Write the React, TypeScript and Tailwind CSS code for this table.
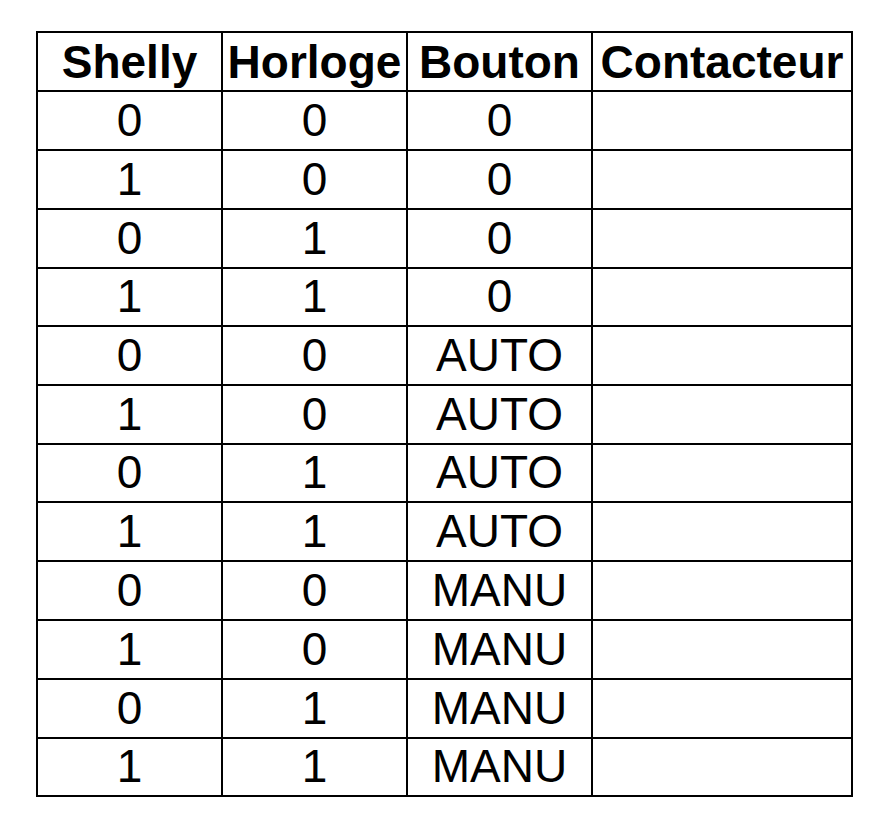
const headers = ['Shelly', 'Horloge', 'Bouton', 'Contacteur'];

const rows: [string, string, string][] = [
  ['0', '0', '0'],
  ['1', '0', '0'],
  ['0', '1', '0'],
  ['1', '1', '0'],
  ['0', '0', 'AUTO'],
  ['1', '0', 'AUTO'],
  ['0', '1', 'AUTO'],
  ['1', '1', 'AUTO'],
  ['0', '0', 'MANU'],
  ['1', '0', 'MANU'],
  ['0', '1', 'MANU'],
  ['1', '1', 'MANU'],
];

export default function App() {
  return (
    <div className="w-[873px] h-[816px] bg-white pl-[36px] pt-[31px] font-['Liberation_Sans',Arial,sans-serif] text-black">
      <div className="grid w-[817px] grid-cols-[183px_183px_183px_258px] grid-rows-[57px_57px_57px_57px_56px_57px_57px_56px_57px_57px_57px_57px_56px] gap-[2px] bg-black p-[2px]">
        {headers.map(h => (
          <div key={h} className="flex items-center justify-center bg-white text-[46px] font-bold leading-none">
            {h}
          </div>
        ))}
        {rows.map((r, i) => (
          <>
            {r.map((v, j) => (
              <div key={`${i}-${j}`} className="flex items-center justify-center bg-white text-[46px] leading-none pb-[2px]">
                {v}
              </div>
            ))}
            <div key={`${i}-c`} className="bg-white" />
          </>
        ))}
      </div>
    </div>
  );
}
